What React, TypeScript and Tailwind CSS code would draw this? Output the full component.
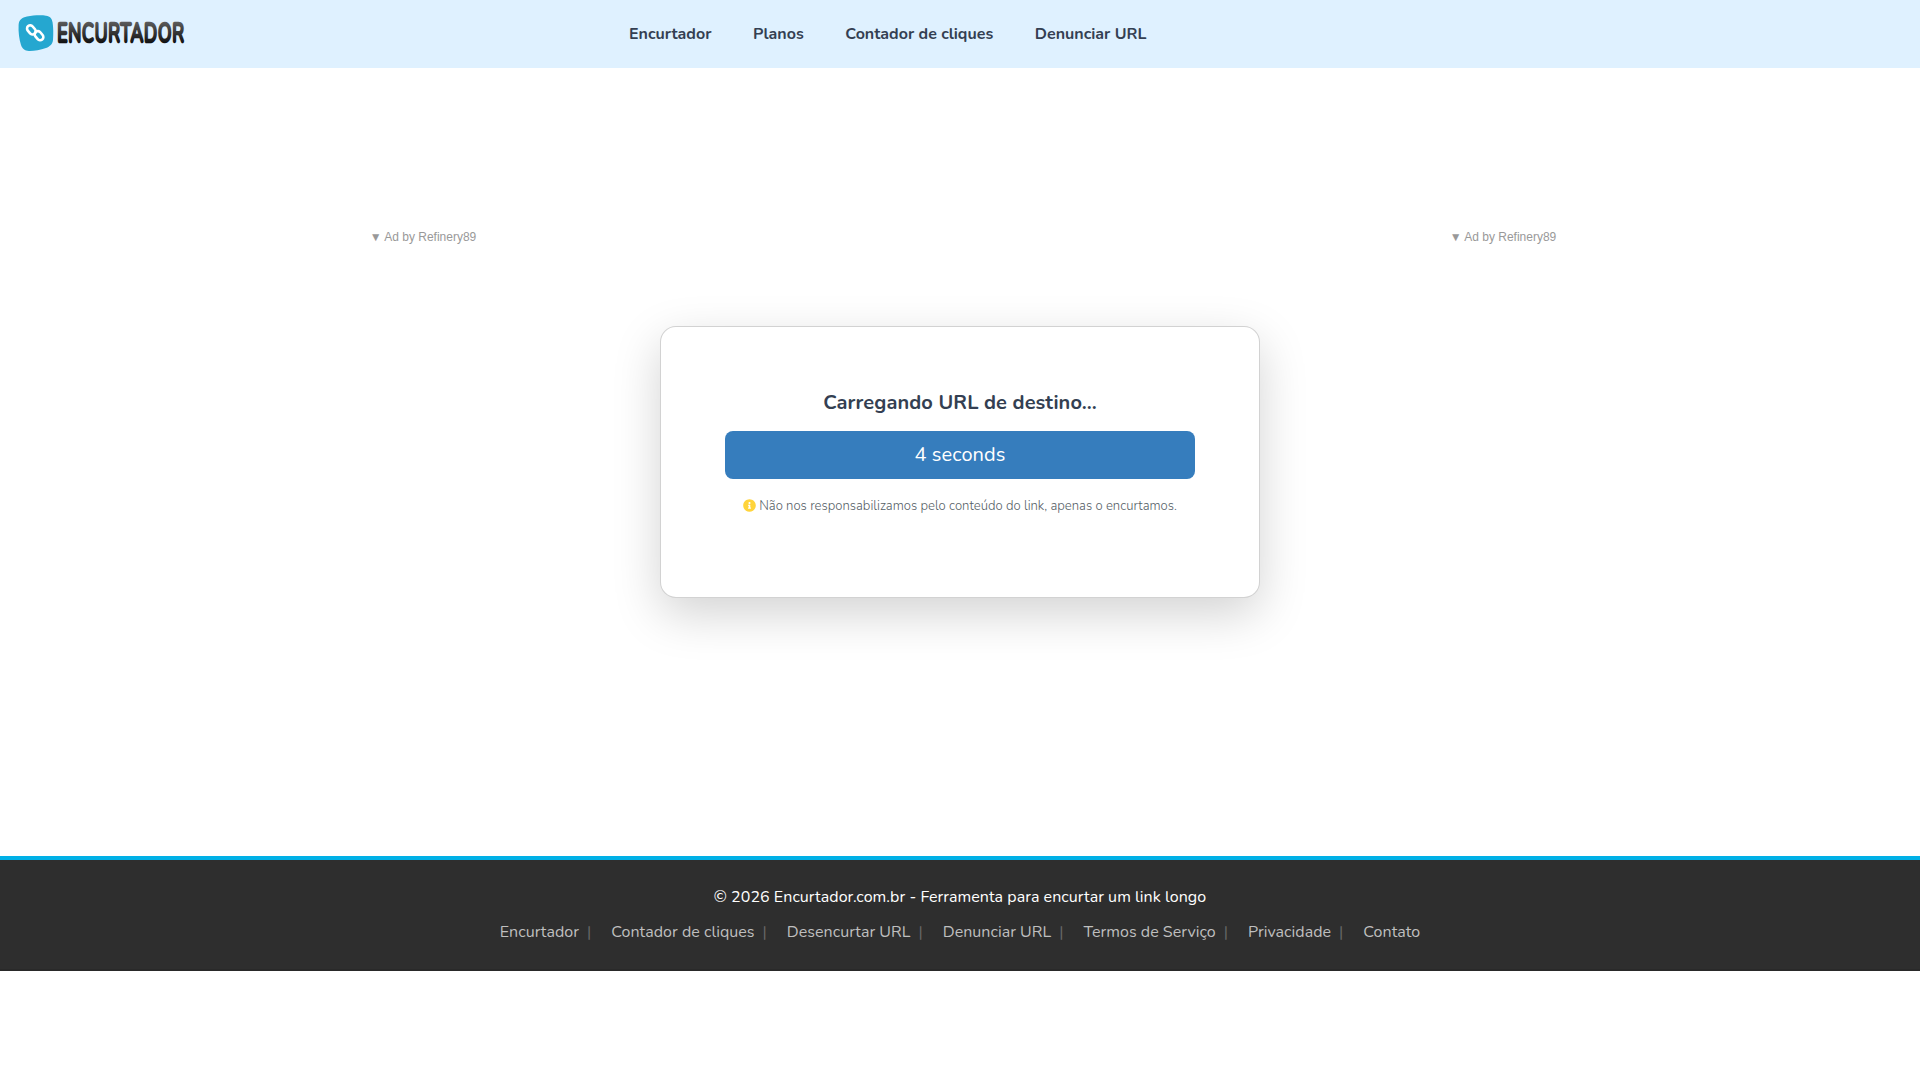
import React from "react";
import { FaInfoCircle } from "react-icons/fa";

const navLinks = ["Encurtador", "Planos", "Contador de cliques", "Denunciar URL"];

const footerLinks = [
  "Encurtador",
  "Contador de cliques",
  "Desencurtar URL",
  "Denunciar URL",
  "Termos de Serviço",
  "Privacidade",
  "Contato",
];

function Logo() {
  return (
    <svg width="180" height="48" viewBox="0 -5 180 48" className="shrink-0">
      <defs>
        <linearGradient id="logoText" x1="0" y1="-20" x2="0" y2="1" gradientUnits="userSpaceOnUse">
          <stop offset="0" stopColor="#5a5a5a" />
          <stop offset="1" stopColor="#111111" />
        </linearGradient>
      </defs>
      <path
        d="M9 1.6 C16 0 24 0.2 28 0.7 C32 1.2 34 3.5 34.6 7.5 C35.3 12 35.5 19 35 25 C34.6 29 32 31.5 28 33 C22 35.2 16 36 11 35.9 C6.5 35.7 4.5 34 3 30 C1.2 24.5 0.2 17 0.6 10 C0.9 5 4 2.5 9 1.6 Z"
        fill="#25a7d0"
      />
      <g fill="none" stroke="#fff" strokeWidth="2.6">
        <rect x="-5" y="-3.2" width="10" height="6.4" rx="3.2" transform="translate(13.4 14.9) rotate(50)" />
        <rect x="-5" y="-3.2" width="10" height="6.4" rx="3.2" transform="translate(21 20.7) rotate(50)" />
      </g>
      <text
        transform="translate(39.2 27.3) scale(0.66 1)"
        textLength="192"
        lengthAdjust="spacing"
        fill="url(#logoText)"
        stroke="url(#logoText)"
        strokeWidth="2.7"
        strokeLinejoin="round"
        className="font-[Nunito,Lato,sans-serif] text-[26.6px] font-normal"
      >
        ENCURTADOR
      </text>
    </svg>
  );
}

function AdLabel() {
  return (
    <div className="w-[120px] text-center font-['Liberation_Sans',Arial,sans-serif] text-xs leading-4 text-[#999]">
      ▼ Ad by Refinery89
    </div>
  );
}

export default function App() {
  return (
    <div className="min-h-screen bg-white font-[Nunito,Lato,sans-serif] text-[#343f52]">
      <header className="flex h-[68px] items-center bg-[#dff1ff] pl-[18px]">
        <Logo />
        <nav className="ml-[431px] flex gap-[41.6px] text-base font-bold">
          {navLinks.map((label) => (
            <a key={label} href="#" className="whitespace-nowrap">
              {label}
            </a>
          ))}
        </nav>
      </header>

      <main className="h-[788px] pt-[161px]">
        <div className="flex justify-between pr-[357px] pl-[363px]">
          <AdLabel />
          <AdLabel />
        </div>

        <div className="mx-auto mt-[81px] h-[272px] w-[600px] rounded-2xl border border-black/[0.175] bg-white px-16 pt-[61px] text-center shadow-[0_16px_48px_rgba(0,0,0,0.175)]">
          <h1 className="text-xl leading-[30px] font-bold tracking-[0.1px]">
            Carregando URL de destino...
          </h1>
          <div className="mt-[13px] h-12 rounded-lg bg-[#367dbd] text-xl leading-[47px] tracking-[0.1px] text-white">
            4 seconds
          </div>
          <p className="mt-[18px] flex items-center justify-center gap-[3px] text-[13.1px] leading-[19px] font-light whitespace-nowrap text-[#555e66]">
            <FaInfoCircle className="mb-0.5 size-[13px] text-[#ffd43b]" />
            Não nos responsabilizamos pelo conteúdo do link, apenas o encurtamos.
          </p>
        </div>
      </main>

      <footer className="h-[115px] border-t-4 border-b-2 border-t-[#00b0e6] border-b-[#292929] bg-[#2e2e2e] pt-[25px] text-center text-base leading-6">
        <p className="tracking-[0.05px] text-white">
          © 2026 Encurtador.com.br - Ferramenta para encurtar um link longo
        </p>
        <ul className="mt-[11px] flex justify-center tracking-[0.03px] text-[#bfbfbf]">
          {footerLinks.map((label, i) => (
            <li key={label} className="flex">
              <a href="#">{label}</a>
              {i < footerLinks.length - 1 && (
                <span className="mr-5 ml-2 text-[#666]">|</span>
              )}
            </li>
          ))}
        </ul>
      </footer>
    </div>
  );
}
